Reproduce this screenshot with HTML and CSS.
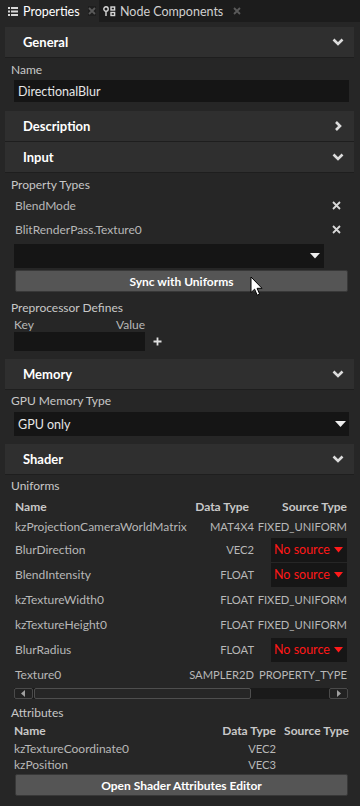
FILE: index.html
```html
<!DOCTYPE html>
<html>
<head>
<meta charset="utf-8">
<link rel="stylesheet" href="styles.css">
</head>
<body>
<div class="tabs">
  <div class="tab active">
    <svg class="tab-icon" width="10" height="9" viewBox="0 0 10 9"><g fill="#d8d8d8"><rect x="0" y="0" width="2" height="2"/><rect x="3" y="0" width="7" height="2"/><rect x="0" y="3.5" width="2" height="2"/><rect x="3" y="3.5" width="7" height="2"/><rect x="0" y="7" width="2" height="2"/><rect x="3" y="7" width="7" height="2"/></g></svg>
    <span class="tab-title">Properties</span>
    <span class="tab-close active-close">
      <svg width="8" height="8" viewBox="0 0 8 8"><path d="M1 1L7 7M7 1L1 7" stroke="#5a5a5a" stroke-width="1.8"/></svg>
    </span>
  </div>
  <div class="tab">
    <svg class="tab-icon" width="13" height="11" viewBox="0 0 13 11"><g fill="none" stroke="#d8d8d8" stroke-width="1.4"><circle cx="3" cy="3" r="2.2"/><path d="M3 5.5V10"/><rect x="8" y="1" width="3.6" height="3"/><rect x="8" y="6.5" width="3.6" height="3"/></g></svg>
    <span class="tab-title">Node Components</span>
    <span class="tab-close">
      <svg width="8" height="8" viewBox="0 0 8 8"><path d="M1 1L7 7M7 1L1 7" stroke="#5a5a5a" stroke-width="1.8"/></svg>
    </span>
  </div>
</div>

<div class="panel">
  <div class="section-header">
    <span>General</span>
    <svg class="chev" width="12" height="8" viewBox="0 0 12 8"><path d="M1.5 1.5L6 6L10.5 1.5" fill="none" stroke="#dcdcdc" stroke-width="2.6"/></svg>
  </div>
  <div class="section-body general">
    <div class="label">Name</div>
    <div class="input text-input">DirectionalBlur</div>
  </div>

  <div class="section-header">
    <span>Description</span>
    <svg class="chev" width="12" height="10" viewBox="0 0 12 10"><path d="M4 1L8 5L4 9" fill="none" stroke="#dcdcdc" stroke-width="2.6"/></svg>
  </div>
  <div class="section-header">
    <span>Input</span>
    <svg class="chev" width="12" height="8" viewBox="0 0 12 8"><path d="M1.5 1.5L6 6L10.5 1.5" fill="none" stroke="#dcdcdc" stroke-width="2.6"/></svg>
  </div>
  <div class="section-body input-body">
    <div class="label">Property Types</div>
    <div class="prop-row">
      <span>BlendMode</span>
      <svg width="9" height="9" viewBox="0 0 9 9"><path d="M1 1L8 8M8 1L1 8" stroke="#d8d8d8" stroke-width="1.8"/></svg>
    </div>
    <div class="prop-row">
      <span>BlitRenderPass.Texture0</span>
      <svg width="9" height="9" viewBox="0 0 9 9"><path d="M1 1L8 8M8 1L1 8" stroke="#d8d8d8" stroke-width="1.8"/></svg>
    </div>
    <div class="input dropdown short">
      <span></span>
      <svg width="10" height="6" viewBox="0 0 10 6"><path d="M0 0H10L5 5.5Z" fill="#eeeeee"/></svg>
    </div>
    <div class="button sync">Sync with Uniforms</div>
    <div class="label pre">Preprocessor Defines</div>
    <div class="kv-head"><span>Key</span><span>Value</span></div>
    <div class="kv-row">
      <div class="input kv-input"></div>
      <svg width="9" height="9" viewBox="0 0 9 9"><path d="M4.5 0.5V8.5M0.5 4.5H8.5" stroke="#e0e0e0" stroke-width="1.8"/></svg>
    </div>
  </div>

  <div class="section-header">
    <span>Memory</span>
    <svg class="chev" width="12" height="8" viewBox="0 0 12 8"><path d="M1.5 1.5L6 6L10.5 1.5" fill="none" stroke="#dcdcdc" stroke-width="2.6"/></svg>
  </div>
  <div class="section-body memory">
    <div class="label">GPU Memory Type</div>
    <div class="input dropdown">
      <span>GPU only</span>
      <svg width="11" height="6" viewBox="0 0 11 6"><path d="M0 0H11L5.5 6Z" fill="#eeeeee"/></svg>
    </div>
  </div>

  <div class="section-header">
    <span>Shader</span>
    <svg class="chev" width="12" height="8" viewBox="0 0 12 8"><path d="M1.5 1.5L6 6L10.5 1.5" fill="none" stroke="#dcdcdc" stroke-width="2.6"/></svg>
  </div>
  <div class="section-body shader">
    <div class="label">Uniforms</div>
    <div class="utable">
      <div class="urow uhead"><span>Name</span><span class="r">Data Type</span><span class="r">Source Type</span></div>
      <div class="urow first"><span>kzProjectionCameraWorldMatrix</span><span class="r caps">MAT4X4</span><span class="r caps">FIXED_UNIFORM</span></div>
      <div class="urow"><span>BlurDirection</span><span class="r caps">VEC2</span><span class="nosrc">No source<svg width="9" height="6" viewBox="0 0 9 6"><path d="M0 0H9L4.5 5.5Z" fill="#ff1a1a"/></svg></span></div>
      <div class="urow"><span>BlendIntensity</span><span class="r caps">FLOAT</span><span class="nosrc">No source<svg width="9" height="6" viewBox="0 0 9 6"><path d="M0 0H9L4.5 5.5Z" fill="#ff1a1a"/></svg></span></div>
      <div class="urow"><span>kzTextureWidth0</span><span class="r caps">FLOAT</span><span class="r caps">FIXED_UNIFORM</span></div>
      <div class="urow"><span>kzTextureHeight0</span><span class="r caps">FLOAT</span><span class="r caps">FIXED_UNIFORM</span></div>
      <div class="urow"><span>BlurRadius</span><span class="r caps">FLOAT</span><span class="nosrc">No source<svg width="9" height="6" viewBox="0 0 9 6"><path d="M0 0H9L4.5 5.5Z" fill="#ff1a1a"/></svg></span></div>
      <div class="urow"><span>Texture0</span><span class="r caps">SAMPLER2D</span><span class="r caps">PROPERTY_TYPE</span></div>
    </div>
    <div class="hscroll">
      <div class="sbtn"><svg width="5" height="7" viewBox="0 0 5 7"><path d="M4 0V7L0 3.5Z" fill="#a0a0a0"/></svg></div>
      <div class="thumb"></div>
      <div class="track"></div>
      <div class="sbtn"><svg width="5" height="7" viewBox="0 0 5 7"><path d="M1 0V7L5 3.5Z" fill="#a0a0a0"/></svg></div>
    </div>
    <div class="label attr-label">Attributes</div>
    <div class="atable">
      <div class="arow ahead"><span>Name</span><span class="r">Data Type</span><span class="r">Source Type</span></div>
      <div class="arow"><span>kzTextureCoordinate0</span><span class="r caps">VEC2</span><span></span></div>
      <div class="arow"><span>kzPosition</span><span class="r caps">VEC3</span><span></span></div>
    </div>
    <div class="button attr-btn">Open Shader Attributes Editor</div>
  </div>
</div>

<svg class="cursor" width="14" height="21" viewBox="0 0 14 21"><path d="M1 1V16.5L4.6 13.2L7.2 19.2L9.6 18.1L7.1 12.3H12Z" fill="#ffffff" stroke="#000000" stroke-width="1" stroke-linejoin="round"/></svg>
</body>
</html>
```

FILE: styles.css
```css
html, body {
  margin: 0;
  padding: 0;
}
body {
  width: 360px;
  height: 806px;
  overflow: hidden;
  background: #262626;
  font-family: Lato, "Open Sans", sans-serif;
  font-size: 12px;
  color: #c4c4c4;
  position: relative;
}
.tabs {
  display: flex;
  height: 22px;
  background: #1c1c1c;
}
.tab {
  display: flex;
  align-items: center;
  height: 22px;
  padding: 0 6px 0 8px;
  color: #d0d0d0;
  font-size: 12.5px;
}
.tab.active {
  background: #262626;
  color: #ffffff;
  width: 85px;
}
.tab-icon {
  margin-right: 5px;
  flex: none;
}
.tab + .tab {
  padding-left: 4px;
}
.tab + .tab .tab-icon {
  margin-right: 4px;
}
.tab-close {
  display: flex;
  align-items: center;
  justify-content: center;
  width: 10px;
  height: 10px;
  margin-left: 8px;
}
.active-close {
  background: #1e1e1e;
}
.tab + .tab .tab-close {
  margin-left: 9px;
}
.panel {
  padding: 5px 6px 0 5px;
}
.section-header {
  height: 30px;
  background: #2f2f2f;
  border-bottom: 1px solid #1e1e1e;
  display: flex;
  align-items: center;
  justify-content: space-between;
  padding: 0 10px 0 18px;
  color: #ffffff;
  font-weight: bold;
  font-size: 13px;
}
.section-body {
  padding: 4px 5px 9px 6px;
}
.label {
  height: 16px;
  line-height: 16px;
  color: #c8c8c8;
}
.input {
  background: #151515;
  height: 22px;
  margin-left: 3px;
  display: flex;
  align-items: center;
  padding: 0 4px;
  color: #e6e6e6;
  font-size: 12.5px;
}
.general .input {
  margin-top: 2px;
}
.input-body {
  padding-bottom: 8px;
}
.prop-row {
  height: 24px;
  display: flex;
  align-items: center;
  justify-content: space-between;
  padding: 0 8px 0 4px;
  color: #b8b8b8;
}
.dropdown {
  justify-content: space-between;
  height: 24px;
  padding-right: 3px;
}
.dropdown.short {
  margin-top: 3px;
  margin-right: 25px;
  padding-right: 4px;
}
.button {
  margin-left: 4px;
  margin-right: 1px;
  height: 20px;
  background: #555555;
  border: 1px solid #383838;
  border-radius: 2px;
  display: flex;
  align-items: center;
  justify-content: center;
  color: #ffffff;
  font-weight: bold;
  font-size: 12px;
}
.sync {
  margin-top: 2px;
}
.label.pre {
  margin-top: 8px;
}
.kv-head {
  display: flex;
  width: 131px;
  justify-content: space-between;
  margin-left: 3px;
  height: 16px;
  line-height: 18px;
  color: #b8b8b8;
}
.kv-row {
  display: flex;
  align-items: center;
}
.kv-input {
  width: 123px;
  height: 19px;
}
.kv-row svg {
  margin-left: 8px;
}
.memory {
  padding-top: 3px;
  padding-bottom: 8px;
}
.memory .dropdown {
  margin-top: 3px;
}
.shader {
  padding-top: 3px;
  padding-bottom: 0;
}
.utable {
  margin-left: 3px;
  margin-right: 2px;
}
.urow {
  display: grid;
  grid-template-columns: minmax(0, 1fr) 78px 92px;
  align-items: center;
  height: 25px;
  color: #b8b8b8;
  white-space: nowrap;
}
.urow.uhead {
  height: 20px;
  margin-top: 2px;
  font-weight: bold;
  color: #c8c8c8;
}
.urow.uhead .r:nth-child(2) {
  padding-right: 6px;
}
.urow.first {
  height: 21px;
}
.urow span:first-child {
  padding-left: 1px;
}
.r {
  text-align: right;
}
.caps {
  font-size: 11.2px;
}
.urow .r.caps:nth-child(2) {
  padding-right: 1px;
}
.nosrc {
  margin-left: 16px;
  height: 24px;
  background: #161616;
  color: #ff1818;
  display: flex;
  align-items: center;
  justify-content: space-between;
  padding: 0 4px 0 3px;
  font-size: 12.5px;
}
.hscroll {
  margin: 1px 1px 0 3px;
  height: 11px;
  display: flex;
  background: #1a1a1a;
  gap: 1px;
}
.sbtn {
  width: 17px;
  height: 9px;
  border: 1px solid #4a4a4a;
  border-radius: 2px;
  display: flex;
  align-items: center;
  justify-content: center;
  background: #222222;
}
.thumb {
  width: 215px;
  height: 9px;
  border: 1px solid #4e4e4e;
  border-radius: 2px;
  background: #262626;
}
.track {
  flex: 1;
}
.attr-label {
  margin-top: 6px;
}
.atable {
  margin-left: 3px;
}
.arow {
  display: grid;
  grid-template-columns: minmax(0, 1fr) 58px 73px;
  height: 16px;
  line-height: 16px;
  color: #b8b8b8;
  white-space: nowrap;
}
.arow.ahead {
  height: 20px;
  line-height: 20px;
  font-weight: bold;
  color: #c8c8c8;
}
.attr-btn {
  margin-top: 1px;
}
.cursor {
  position: absolute;
  left: 250px;
  top: 276px;
}
```
